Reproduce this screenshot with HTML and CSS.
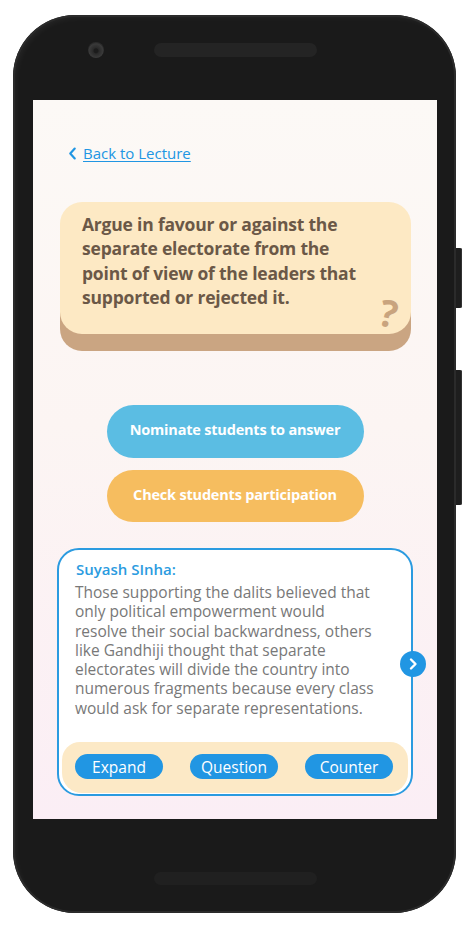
FILE: index.html
```html
<!DOCTYPE html>
<html lang="en">
<head>
<meta charset="utf-8">
<title>Question</title>
<link rel="stylesheet" href="styles.css">
</head>
<body>
<div class="phone">
  <div class="bezel-top">
    <span class="camera"></span>
    <span class="speaker"></span>
  </div>
  <div class="screen">
    <a class="back" href="#">
      <svg class="back-icon" viewBox="0 0 10 14" width="9" height="13"><path d="M7.5 1.5 L2.5 7 L7.5 12.5" fill="none" stroke="#2196e3" stroke-width="2.4" stroke-linecap="round" stroke-linejoin="round"/></svg>
      <span class="back-text">Back to Lecture</span>
    </a>
    <div class="question-card">
      <p class="question-text">Argue in favour or against the separate electorate from the point of view of the leaders that supported or rejected it.</p>
      <span class="qmark">?</span>
    </div>
    <div class="actions">
      <button class="pill pill-blue">Nominate students to answer</button>
      <button class="pill pill-orange">Check students participation</button>
    </div>
    <div class="answer-card">
      <div class="answer-body">
        <h3 class="answer-name">Suyash SInha:</h3>
        <p class="answer-text">Those supporting the dalits believed that only political empowerment would resolve their social backwardness, others like Gandhiji thought that separate electorates will divide the country into numerous fragments because every class would ask for separate representations.</p>
      </div>
      <div class="answer-bar">
        <button class="chip">Expand</button>
        <button class="chip">Question</button>
        <button class="chip">Counter</button>
      </div>
      <span class="next">
        <svg viewBox="0 0 26 26" width="26" height="26"><circle cx="13" cy="13" r="13" fill="#2196e3"/><path d="M11 8.5 L15.5 13 L11 17.5" fill="none" stroke="#fff" stroke-width="2.4" stroke-linecap="round" stroke-linejoin="round"/></svg>
      </span>
    </div>
  </div>
  <div class="bezel-bottom">
    <span class="speaker"></span>
  </div>
  <span class="side-btn side-btn-1"></span>
  <span class="side-btn side-btn-2"></span>
</div>
</body>
</html>
```
FILE: styles.css
```css
* { box-sizing: border-box; }
html, body { margin: 0; padding: 0; background: #ffffff; }
body { font-family: "Open Sans", "Noto Sans", sans-serif; }

.phone {
  position: relative;
  width: 443px;
  height: 898px;
  margin: 15px 0 0 13px;
  background: #1a1a1a;
  border-radius: 62px;
  box-shadow: inset 0 0 0 2px #2b2b2b, inset 3px 3px 6px rgba(255,255,255,0.05);
  display: flex;
  flex-direction: column;
  align-items: flex-start;
}

.bezel-top {
  height: 85px;
  align-self: stretch;
  display: flex;
  align-items: flex-start;
  padding: 27px 0 0 75px;
}
.camera {
  width: 16px; height: 16px;
  border-radius: 50%;
  background: radial-gradient(circle at 50% 55%, #1c1c1c 0 2px, #2a2a2a 3px, #3a3a3a 7px, #2c2c2c 8px);
}
.bezel-top .speaker { margin: 1px 0 0 50px; }
.speaker {
  width: 163px; height: 14px;
  border-radius: 7px;
  background: #242424;
}

.screen {
  margin-left: 20px;
  width: 404px;
  height: 719px;
  background: linear-gradient(180deg, #fcf9f6 0%, #fcf5f3 45%, #fbeef5 100%);
  display: flex;
  flex-direction: column;
  padding: 43px 0 0 0;
}

.bezel-bottom {
  height: 94px;
  align-self: stretch;
  display: flex;
  justify-content: center;
  padding: 53px 0 0 2px;
}
.bezel-bottom .speaker { height: 13px; background: #202020; }

.side-btn {
  position: absolute;
  right: -6px;
  width: 6px;
  background: #1e1e1e;
  border-radius: 0 2px 2px 0;
  box-shadow: inset -1px 0 0 #333;
}
.side-btn-1 { top: 233px; height: 60px; }
.side-btn-2 { top: 355px; height: 135px; }

/* back link */
.back {
  display: flex;
  align-items: center;
  gap: 6px;
  margin-left: 35px;
  color: #2196e3;
  text-decoration: none;
  align-self: flex-start;
}
.back-icon { display: block; }
.back-text {
  font-size: 15px;
  text-decoration: underline;
  text-underline-offset: 2px;
  line-height: 20px;
}

/* question card */
.question-card {
  position: relative;
  margin: 39px 26px 0 27px;
  height: 132px;
  background: #fde9c4;
  border-radius: 22px;
  box-shadow: 0 17px 0 #caa582;
  padding: 10px 40px 0 22px;
}
.question-text {
  margin: 0;
  font-size: 17.5px;
  font-weight: 700;
  line-height: 24.3px;
  color: #6b5847;
  letter-spacing: -0.2px;
}
.qmark {
  position: absolute;
  right: 13px;
  bottom: 3px;
  font-size: 37px;
  font-weight: 700;
  color: #c9a47e;
  line-height: 1;
  transform: rotate(12deg);
}

/* action pills */
.actions {
  display: flex;
  flex-direction: column;
  align-items: center;
  gap: 12px;
  margin-top: 71px;
}
.pill {
  width: 257px;
  height: 53px;
  border: none;
  border-radius: 27px;
  color: #ffffff;
  font-family: inherit;
  font-size: 14.5px;
  font-weight: 700;
  letter-spacing: -0.2px;
  padding: 0 0 4px 0;
}
.pill-blue { background: #5bbde3; }
.pill-orange { background: #f6bd5f; height: 52px; }

/* answer card */
.answer-card {
  position: relative;
  margin: 26px 24px 0 24px;
  height: 248px;
  border: 2px solid #2b9be0;
  border-radius: 22px;
  background: #ffffff;
  display: flex;
  flex-direction: column;
  padding: 0 3px 0 3px;
}
.answer-body {
  flex: 1;
  padding: 9px 32px 0 13px;
}
.answer-name {
  margin: 0 0 4px 1px;
  font-size: 15px;
  font-weight: 600;
  color: #2b9be0;
  line-height: 20px;
}
.answer-text {
  margin: 0;
  font-size: 15.5px;
  line-height: 19.3px;
  color: #787878;
}
.answer-bar {
  height: 51px;
  background: #fce9c6;
  border-radius: 18px 18px 20px 20px;
  display: flex;
  justify-content: space-between;
  align-items: flex-start;
  padding: 12px 15px 0 13px;
  margin-bottom: 1px;
}
.chip {
  height: 25px;
  width: 88px;
  border: none;
  border-radius: 13px;
  background: #2196e3;
  color: #ffffff;
  font-family: inherit;
  font-size: 15.5px;
  padding: 0;
}
.next {
  position: absolute;
  right: -15px;
  top: 101px;
  width: 26px;
  height: 26px;
}
.next svg { display: block; }
```
